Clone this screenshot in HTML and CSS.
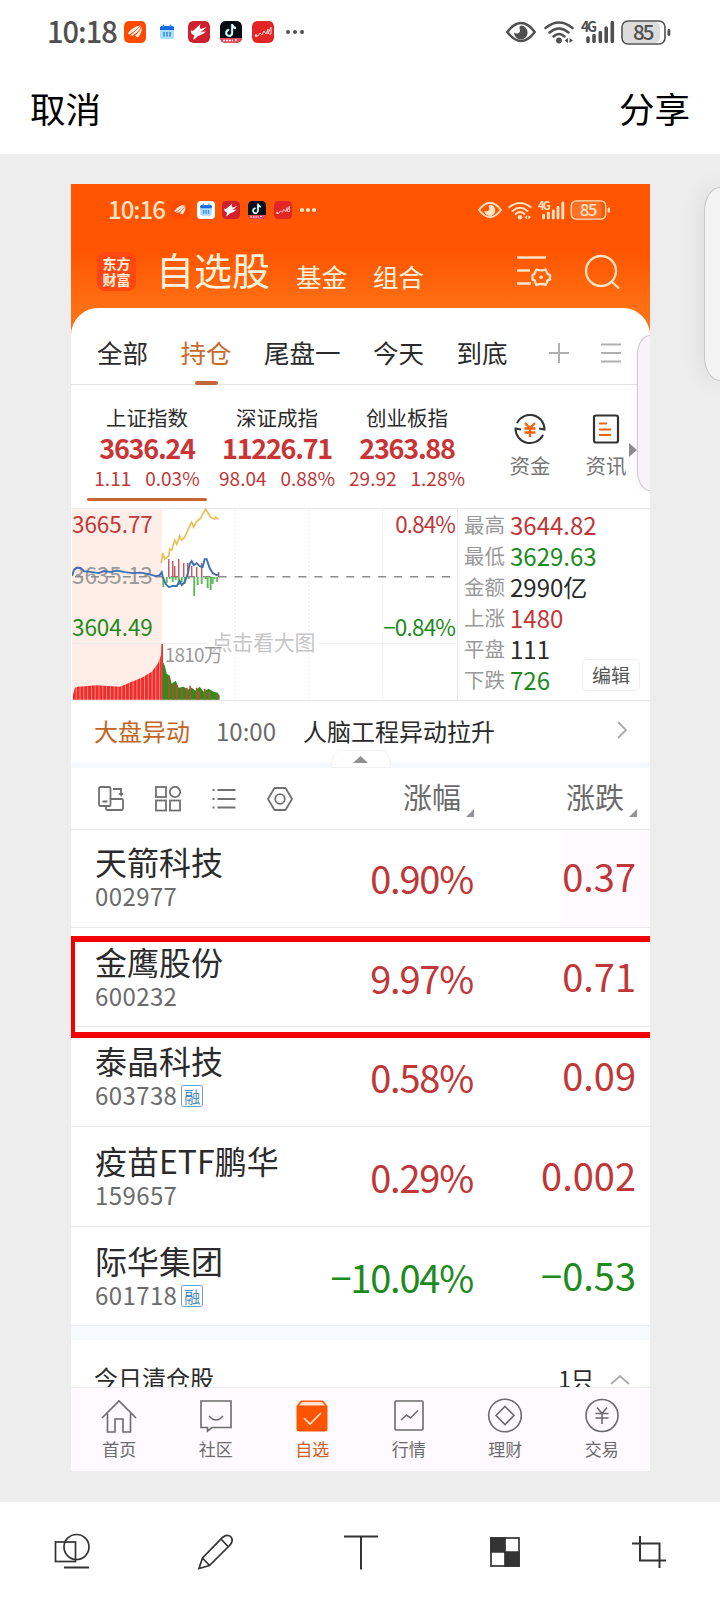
FILE: index.html
```html
<!DOCTYPE html>
<html lang="zh-CN">
<head>
    <meta charset="utf-8">
    <title>编辑截图</title>
    <link rel="stylesheet" href="styles.css">
</head>
<body>
    <!-- shared icons -->
    <svg class="sprite" width="0" height="0">
        <symbol id="app-wing" viewBox="0 0 22 22">
            <path d="M4 12.500Q8 6 16 4.500Q13 9 5 13.500ZM6 14.500Q12 10 17 4.500Q16 10 9 14.500ZM11 15Q16 10 17.500 6Q18.500 11 14 16.500Z" fill="#fff3e8"/>
        </symbol>
        <symbol id="app-calendar" viewBox="0 0 22 22">
            <rect x="4" y="5" width="14" height="13" rx="2" fill="#a9dcff"/>
            <path d="M4 9V6.500Q4 5 6 5H16Q18 5 18 6.500V9Z" fill="#1769e0"/>
            <path d="M7.500 3.500V6M14.500 3.500V6M8 11V15.500M11 11V15.500M14 11V15.500" stroke="#3a8de0" stroke-width="1.600"/>
        </symbol>
        <symbol id="app-bird" viewBox="0 0 22 22">
            <rect width="22" height="22" rx="5" fill="#d0202e"/>
            <path d="M3 9Q4 11 6 9L12.500 3Q11 7 13 8L18.500 6Q16 9 12.500 11L18 10.500Q15 14 10 15L5.500 19Q5 17 6.500 14.500Q2 13 3 9Z" fill="#fff"/>
        </symbol>
        <symbol id="app-note" viewBox="0 0 22 22">
            <rect width="22" height="22" rx="5" fill="#0b0b14"/>
            <path d="M0 17H22Q22 22 17 22H5Q0 22 0 17Z" fill="#e8495c"/>
            <path d="M3 19.500H13M15 19H18" stroke="#fff" stroke-width="1.300" stroke-dasharray="2 1"/>
            <path d="M12 3V11.500A3 3 0 1 1 9 8.800M12 3.500Q12.500 6.500 16 7" fill="none" stroke="#35d6dd" stroke-width="2.200"/>
            <path d="M12.300 3.300V11.700A3 3 0 1 1 9.300 9M12.300 3.800Q13 6.800 16 7.300" fill="none" stroke="#fff" stroke-width="1.600"/>
        </symbol>
        <symbol id="app-trend" viewBox="0 0 22 22">
            <rect width="22" height="22" rx="5" fill="#e32526"/>
            <path d="M3 15H6L8 12L10 14L12 10L14 13L16 8V13L19 6V13H17" fill="none" stroke="#ffd9d5" stroke-width="1"/>
            <circle cx="4" cy="14.500" r="1.300" fill="#ffd9d5"/>
        </symbol>
        <symbol id="eye" viewBox="0 0 30 22">
            <path d="M1.300 11Q8 2 15 2T28.700 11Q22 20 15 20T1.300 11Z" fill="none" stroke="currentColor" stroke-width="2.400"/>
            <path d="M15 4.500A6.800 7 0 1 1 8 11.500Q9.500 13 12 12.200Q15 11 13.500 7.500Q13 5.500 15 4.500Z" fill="currentColor"/>
        </symbol>
        <symbol id="wifi" viewBox="0 0 30 24">
            <path d="M1.500 8Q15-3 28.500 8M5.500 12.500Q15 4.500 24.500 12.500M9.500 16.500Q15 11.500 20.500 16.500" fill="none" stroke="currentColor" stroke-width="2.500" stroke-linecap="round"/>
            <circle cx="15" cy="20.500" r="2.900" fill="currentColor"/>
            <path d="M24 18V23L20.500 20.500ZM25.500 18V23L29 20.500Z" fill="currentColor"/>
        </symbol>
        <symbol id="corner" viewBox="0 0 8 8"><path d="M8 0V8H0Z" fill="#93939a"/></symbol>
    </svg>

    <div class="status">
        <span class="clock">10:18</span>
        <svg class="app orange"><use href="#app-wing"/></svg>
        <svg class="app"><use href="#app-calendar"/></svg>
        <svg class="app"><use href="#app-bird"/></svg>
        <svg class="app"><use href="#app-note"/></svg>
        <svg class="app"><use href="#app-trend"/></svg>
        <span class="dots"><i></i><i></i><i></i></span>
        <svg class="eye"><use href="#eye"/></svg>
        <svg class="wifi"><use href="#wifi"/></svg>
        <svg class="signal" viewBox="0 0 34 24">
            <path d="M7 18V21.500M13 15.500V21.500M19.300 12.500V21.500M25.200 8V21.500M31.300 2.500V21.500" stroke="currentColor" stroke-width="3.600" stroke-linecap="round"/>
            <text x="0" y="11.500" textLength="16" font-size="14" font-weight="700" fill="currentColor">4G</text>
        </svg>
        <svg class="battery" viewBox="0 0 50 25">
            <rect x="2" y="2" width="37" height="21" rx="5" fill="currentColor" opacity=".2"/>
            <rect x="1" y="1" width="43" height="23" rx="6" fill="none" stroke="currentColor" stroke-width="1.600"/>
            <rect x="46.500" y="9" width="2.800" height="7" rx="1.400" fill="currentColor"/>
            <text x="12" y="20" textLength="21.500" font-size="20.500" font-weight="500" fill="currentColor">85</text>
        </svg>
    </div>

    <div class="title-bar">
        <span>取消</span>
        <span>分享</span>
    </div>

    <div class="canvas">
        <div class="edge-bubble"></div>
        <div class="shot">
            <div class="inner-bubble"></div>
            <div class="header">
                <div class="status small">
                    <span class="clock">10:16</span>
                    <svg class="app orange"><use href="#app-wing"/></svg>
                    <svg class="app white"><use href="#app-calendar"/></svg>
                    <svg class="app"><use href="#app-bird"/></svg>
                    <svg class="app"><use href="#app-note"/></svg>
                    <svg class="app"><use href="#app-trend"/></svg>
                    <span class="dots"><i></i><i></i><i></i></span>
                    <svg class="eye"><use href="#eye"/></svg>
                    <svg class="wifi"><use href="#wifi"/></svg>
                    <svg class="signal" viewBox="0 0 34 24">
                        <path d="M7 18V21.500M13 15.500V21.500M19.300 12.500V21.500M25.200 8V21.500M31.300 2.500V21.500" stroke="currentColor" stroke-width="3.600" stroke-linecap="round"/>
                        <text x="0" y="11.500" textLength="16" font-size="14" font-weight="700" fill="currentColor">4G</text>
                    </svg>
                    <svg class="battery" viewBox="0 0 50 25">
                        <rect x="2" y="2" width="37" height="21" rx="5" fill="currentColor" opacity=".2"/>
                        <rect x="1" y="1" width="43" height="23" rx="6" fill="none" stroke="currentColor" stroke-width="1.600"/>
                        <rect x="46.500" y="9" width="2.800" height="7" rx="1.400" fill="currentColor"/>
                        <text x="12" y="20" textLength="21.500" font-size="20.500" font-weight="500" fill="currentColor">85</text>
                    </svg>
                </div>
                <div class="brand">
                    <div class="logo">东方<br>财富</div>
                    <span class="brand-main">自选股</span>
                    <span class="brand-sub">基金</span>
                    <span class="brand-sub">组合</span>
                    <svg class="filter" width="36" height="34" viewBox="0 0 36 34" fill="none" stroke="#ffe3c4" stroke-width="2.300">
                        <path d="M1 3.500H30M1 16.500H14M1 29.500H15"/>
                        <path d="M20.500 15.500Q25 17.500 29.500 15.500L31 18.500Q31 20 34 21V25.500Q31 26 31 28L29.500 31Q25 29 20.500 31L19 28Q19 26 16.500 25.500V21Q19 20 19 18.500Z" stroke-linejoin="round"/>
                        <circle cx="25.200" cy="23.200" r="1.800" fill="#ffe3c4" stroke="none"/>
                    </svg>
                    <svg class="search" width="36" height="36" viewBox="0 0 36 36" fill="none" stroke="#ffe3c4" stroke-width="2.300">
                        <circle cx="17" cy="17" r="15"/><path d="M27 27L35 34.500"/>
                    </svg>
                </div>
            </div>

            <div class="tabs">
                <span>全部</span>
                <span class="active">持仓</span>
                <span>尾盘一</span>
                <span>今天</span>
                <span>到底</span>
                <svg width="20" height="20" viewBox="0 0 20 20" stroke="#b0b0b0" stroke-width="2"><path d="M10 0V20M0 10H20"/></svg>
                <svg width="20" height="20" viewBox="0 0 20 20" stroke="#b0b0b0" stroke-width="2"><path d="M0 1.500H20M0 10H20M0 18.500H20"/></svg>
            </div>

            <div class="indices">
                <div class="index current">
                    <span class="index-name">上证指数</span>
                    <b>3636.24</b>
                    <span class="index-change"><i>1.11</i><i>0.03%</i></span>
                </div>
                <div class="index">
                    <span class="index-name">深证成指</span>
                    <b>11226.71</b>
                    <span class="index-change"><i>98.04</i><i>0.88%</i></span>
                </div>
                <div class="index">
                    <span class="index-name">创业板指</span>
                    <b>2363.88</b>
                    <span class="index-change"><i>29.92</i><i>1.28%</i></span>
                </div>
                <div class="shortcut">
                    <svg width="32" height="32" viewBox="0 0 32 32" fill="none" stroke="#333" stroke-width="2">
                        <path d="M3 10A14.500 14.500 0 0 1 30.500 16.500L25 15.500M29 22A14.500 14.500 0 0 1 1.500 15.500L7 16.500"/>
                        <path d="M11 10L16 15L21 10M10.500 15.500H21.500M10.500 19.500H21.500M16 15V24" stroke="#f0640f" stroke-width="2.400"/>
                    </svg>
                    <span>资金</span>
                </div>
                <div class="shortcut news">
                    <svg width="32" height="32" viewBox="0 0 32 32" fill="none" stroke="#333" stroke-width="2.200">
                        <rect x="4" y="2.500" width="24" height="27" rx="2"/>
                        <path d="M9 10.500H17M9 16.500H21M9 22H21" stroke="#f0640f"/>
                    </svg>
                    <span>资讯</span>
                </div>
                <svg class="more" width="8" height="14" viewBox="0 0 8 14"><path d="M0 0L8 7L0 14Z" fill="#8c8c8c"/></svg>
            </div>

            <div class="market">
                <svg class="chart" width="386" height="193" viewBox="0 0 386 193">
                    <defs>
                        <pattern id="bars" width="3.800" height="10" patternUnits="userSpaceOnUse">
                            <rect width="3.800" height="10" fill="#ef2d2d"/><rect width=".8" height="10" fill="#ff9a92"/>
                        </pattern>
                    </defs>
                    <rect x="0" y="1" width="90" height="191" fill="#ffede7"/>
                    <path d="M163.500 1V192M237.500 1V192M311.500 1V192" stroke="#ececec" stroke-dasharray="2 2"/>
                    <path d="M0 135.500H136M247 135.500H385" stroke="#ececec"/>
                    <text x="0" y="76" textLength="81" font-size="22.500" fill="#999">3635.13</text>
                    <path d="M3 68.700H385" stroke="#8b8b8b" stroke-width="1.300" stroke-dasharray="8 8"/>
                    <path d="M97 69V51M101 69V53M103 69V58M107 69V51M112 69V55M116 69V55M120 69V58M125 69V59M130 69V55M147 69V64" stroke="#c75a5f" stroke-width="1.500"/>
                    <path d="M91.500 69V79M95 69V75M98 69V71M101 69V74M104 69V72M107 69V77M110 69V74M113 69V76M117 69V71M122.500 69V88M126 69V77M130 69V76M134 69V71M136 69V80M139 69V82M141 69V76M143 69V71M145.500 69V74" stroke="#5fb958" stroke-width="1.900"/>
                    <polyline points="0,68 2,62 5,59.500 9,60 12,63 20,64 27,65 32,63 39,64 45,62.500 53,64 61,65 69,64.500 77,66 84,68 88,67 90,64 91,69 94,76 97,79 101,78 105,78 108,73 110,77 113,74 116,66 118,56 120,53 122,57 125,55 128,58 131,59 133,51 135,51 138,60 141,65 145,67 147,66" fill="none" stroke="#3d70b2" stroke-width="1.900"/>
                    <polyline points="89.500,55 91,45 93,51 97,48 98,41 100,42 103,32 105,36 108,28 110,32 113,29 117,20 120,14 122,19 125,13 129,10 131,6 134,1 136,4 139,9 143,11 144,9 147,11" fill="none" stroke="#edbd56" stroke-width="1.700"/>
                    <path d="M1 192V187L3 180L6 179L24 177.500L48 179L60 174L70 170L80 164L86 156L89 148L90 136V192Z" fill="url(#bars)"/>
                    <path d="M91 192V154L93 158L95 166L98 168L100 176L104 173L107 180L112 179L116 182L120 180L124 183L128 179L132 184L137 181L142 184L146 185L148 188V192Z" fill="#289017"/>
                    <path d="M90.500 192V136M97 192V168M101.500 192V175M105 192V177M110 192V180M115 192V180M118.500 192V178M125 192V180M127 192V184M133 192V181M138 192V183M145 192V186" stroke="#c4483a" stroke-width="1.700"/>
                    <text x="0" y="25" textLength="81" font-size="22.500" fill="#bf3737">3665.77</text>
                    <text x="0" y="128.500" textLength="81" font-size="22.500" fill="#1d8a1d">3604.49</text>
                    <text x="93" y="154.500" textLength="58" font-size="19" fill="#999">1810万</text>
                    <text x="140" y="142" textLength="104" font-size="21" fill="#c6c6c6">点击看大图</text>
                    <text x="324" y="25" textLength="61" font-size="22.500" fill="#bf3737">0.84%</text>
                    <text x="312" y="128.500" textLength="73" font-size="22.500" fill="#1d8a1d">−0.84%</text>
                </svg>
                <div class="stats">
                    <div><span>最高</span><em class="up">3644.82</em></div>
                    <div><span>最低</span><em class="down">3629.63</em></div>
                    <div><span>金额</span><em>2990亿</em></div>
                    <div><span>上涨</span><em class="up">1480</em></div>
                    <div><span>平盘</span><em>111</em></div>
                    <div><span>下跌</span><em class="down">726</em></div>
                    <div class="edit">编辑</div>
                </div>
            </div>

            <div class="alert-row">
                <span class="alert-tag">大盘异动</span>
                <span class="alert-time">10:00</span>
                <span>人脑工程异动拉升</span>
                <svg width="10" height="18" viewBox="0 0 10 18" fill="none" stroke="#aaa" stroke-width="1.800"><path d="M1 1L9 9L1 17"/></svg>
            </div>
            <div class="fold">
                <svg width="60" height="18" viewBox="0 0 60 18">
                    <path d="M0 17.500Q2 0 10 .5H50Q58 0 60 17.500Z" fill="#fff" stroke="#f1f1f4"/>
                    <path d="M22 13L29.500 6L37 13Z" fill="#8f8f8f"/>
                </svg>
            </div>

            <div class="list-head">
                <svg width="26" height="26" viewBox="0 0 26 26" fill="none" stroke="#707070" stroke-width="1.800">
                    <path d="M8 20H2.500Q1 20 1 18.500V2.500Q1 1 2.500 1H11Q12.500 1 12.500 2.500V19.500M4.500 15.500H9.500"/>
                    <path d="M15 3H23V9L21 7.500M23 9L25 7.500M12.500 13H23.500Q25 13 25 14.500V22.500Q25 24 23.500 24H9.500Q8 24 8 22.500V20H12.500"/>
                </svg>
                <svg width="28" height="26" viewBox="0 0 28 26" fill="none" stroke="#707070" stroke-width="1.800">
                    <rect x="2" y="1" width="10" height="10"/><circle cx="21" cy="6" r="5.200"/>
                    <rect x="2" y="14.500" width="10" height="10"/><rect x="16" y="14.500" width="10" height="10"/>
                </svg>
                <svg width="26" height="26" viewBox="0 0 26 26" stroke="#707070" stroke-width="2.200">
                    <path d="M6.500 4H24.500M6.500 13H24.500M6.500 21.500H24.500"/><path d="M1.500 4H3.500M1.500 13H3.500M1.500 21.500H3.500"/>
                </svg>
                <svg width="26" height="26" viewBox="0 0 26 26" fill="none" stroke="#707070" stroke-width="1.800">
                    <path d="M7.500 2H18.500L25 13L18.500 24H7.500L1 13Z" stroke-linejoin="round"/><circle cx="13" cy="13" r="4.800"/>
                </svg>
                <div class="col-rate">涨幅<svg><use href="#corner"/></svg></div>
                <div class="col-diff">涨跌<svg><use href="#corner"/></svg></div>
            </div>

            <div class="stocks">
                <div class="stock">
                    <div class="stock-name">天箭科技<small>002977</small></div>
                    <div class="rate up">0.90%</div>
                    <div class="diff up tint">0.37</div>
                </div>
                <div class="stock">
                    <div class="mark"></div>
                    <div class="stock-name">金鹰股份<small>600232</small></div>
                    <div class="rate up">9.97%</div>
                    <div class="diff up">0.71</div>
                </div>
                <div class="stock">
                    <div class="stock-name">泰晶科技<small>603738<i>融</i></small></div>
                    <div class="rate up">0.58%</div>
                    <div class="diff up">0.09</div>
                </div>
                <div class="stock">
                    <div class="stock-name">疫苗ETF鹏华<small>159657</small></div>
                    <div class="rate up">0.29%</div>
                    <div class="diff up">0.002</div>
                </div>
                <div class="stock">
                    <div class="stock-name">际华集团<small>601718<i>融</i></small></div>
                    <div class="rate down">−10.04%</div>
                    <div class="diff down">−0.53</div>
                </div>
            </div>

            <div class="closed">
                <span>今日清仓股</span>
                <span class="closed-count">1只</span>
                <svg width="20" height="10" viewBox="0 0 20 10" fill="none" stroke="#aaa" stroke-width="1.700"><path d="M1 9L10 1L19 9"/></svg>
            </div>

            <div class="nav">
                <div>
                    <svg viewBox="0 0 36 36"><path d="M1 20L18 3L35 20M6.500 15.500V34H14V21H22V34H29.500V15.500"/></svg>
                    <span>首页</span>
                </div>
                <div>
                    <svg viewBox="0 0 36 36"><path d="M3 3H33V29.500H14L9.500 33V29.500H3ZM11 18Q18 26 25 18"/></svg>
                    <span>社区</span>
                </div>
                <div class="active">
                    <svg viewBox="0 0 36 36"><path d="M2.500 8L7 2.500H29L33.500 8V31Q33.500 33.500 31 33.500H5Q2.500 33.500 2.500 31Z" fill="#ff5500" stroke="none"/><path d="M8 4H28L31 7.500H5Z" fill="#ffe6d3" stroke="none"/><path d="M10 20L16 26L27 15" stroke="#ffe6d3"/></svg>
                    <span>自选</span>
                </div>
                <div>
                    <svg viewBox="0 0 36 36"><rect x="4" y="3" width="28" height="29" rx="1"/><path d="M10 22L15.500 17L19.500 20L27 12.500"/></svg>
                    <span>行情</span>
                </div>
                <div>
                    <svg viewBox="0 0 36 36"><circle cx="18" cy="17.500" r="16.300"/><path d="M18 8.500L27 17.500L18 26.500L9 17.500Z"/></svg>
                    <span>理财</span>
                </div>
                <div>
                    <svg viewBox="0 0 36 36"><circle cx="18" cy="17.500" r="16"/><path d="M13 9.500L18 15.500L23 9.500M11.500 15.500H24.500M11.500 20H24.500M18 15.500V26"/></svg>
                    <span>交易</span>
                </div>
            </div>
        </div>
    </div>

    <div class="tools">
        <div><svg viewBox="0 0 40 40"><rect x="3.500" y="12" width="20" height="19.500"/><circle cx="24.500" cy="17" r="12.500"/><path d="M12 37.500H37" stroke-width="2"/></svg></div>
        <div><svg viewBox="0 0 40 40"><path d="M3 38.500L6.500 28L26.500 7.500Q31.500 3.500 35 7Q38 11 33.500 15.500L13.500 35.500ZM6.500 28L13.500 35.500M25 9L32 16.500"/></svg></div>
        <div><svg viewBox="0 0 40 40"><path d="M4 6.500H38M21 6.500V39.500" stroke-width="2"/></svg></div>
        <div><svg viewBox="0 0 40 40"><rect x="7" y="8" width="28" height="28"/><path d="M7 8H21V22H7ZM21 22H35V36H21Z" fill="#333"/></svg></div>
        <div><svg viewBox="0 0 40 40"><path d="M4 13.500H31.500V38M12 6V30.500H38" stroke-width="2"/></svg></div>
    </div>
</body>
</html>
```
FILE: styles.css
```css
* {
    box-sizing: border-box;
}

body {
    margin: 0;
    width: 720px;
    height: 1600px;
    overflow: hidden;
    background-color: #fff;
    color: #2b2b2b;
    font-family: "Noto Sans CJK SC", sans-serif;
    font-weight: 400;
}

i, em {
    font-style: normal;
}

svg {
    display: block;
    flex: none;
}

.sprite {
    position: absolute;
}

/* status bar, used full size and inside the screenshot */
.status {
    display: flex;
    align-items: center;
    height: 64px;
    padding-left: 47px;
    color: #505050;
}

.clock {
    width: 77px;
    font-size: 29px;
    font-weight: 500;
    line-height: 30px;
    letter-spacing: -1px;
    padding-bottom: 4px;
}

.app {
    width: 22px;
    height: 22px;
    margin-right: 10px;
    border-radius: 5px;
}

.orange {
    background-color: #ff4a00;
}

.white {
    background-color: #fff;
}

.dots {
    display: flex;
    gap: 3px;
    width: 222px;
    padding-left: 2px;
}

.dots i {
    width: 4px;
    height: 4px;
    border-radius: 50%;
    background-color: currentColor;
}

.eye {
    width: 30px;
    height: 22px;
}

.wifi {
    width: 30px;
    height: 24px;
    margin-left: 8px;
}

.signal {
    width: 34px;
    height: 24px;
    margin-left: 7px;
}

.battery {
    width: 50px;
    height: 25px;
    margin-left: 6px;
}

.small {
    height: 52px;
    padding-left: 37px;
    color: #ffe3c4;
}

.small .clock {
    width: 63px;
    font-size: 24px;
    padding-bottom: 2px;
}

.small .app {
    width: 18px;
    height: 18px;
    margin-right: 7.700px;
    border-radius: 4px;
}

.small .dots {
    gap: 2.500px;
    width: 179px;
    padding-left: 1px;
}

.small .dots i {
    width: 3.500px;
    height: 3.500px;
}

.small .eye {
    width: 24px;
    height: 18px;
}

.small .wifi {
    width: 24px;
    height: 19px;
    margin-left: 6px;
}

.small .signal {
    width: 27px;
    height: 19px;
    margin-left: 6px;
}

.small .battery {
    width: 41px;
    height: 20px;
    margin-left: 5px;
}

.title-bar {
    display: flex;
    justify-content: space-between;
    height: 90px;
    padding: 18px 30px 0;
    font-size: 35.500px;
    line-height: 52px;
    color: #000;
}

.canvas {
    position: relative;
    height: 1348px;
    padding: 30px 71px 0;
    background-color: #ededed;
}

.edge-bubble {
    position: absolute;
    left: 704px;
    top: 33px;
    width: 16px;
    height: 194px;
    border: 1px solid #c8c8c8;
    border-right: 0;
    border-radius: 16px 0 0 16px / 24px 0 0 24px;
    background-color: #f3f3f3;
    box-shadow: 0 0 24px rgba(0, 0, 0, 0.1);
}

.shot {
    position: relative;
    width: 579px;
    height: 1287px;
    overflow: hidden;
    background-color: #fff;
}

.inner-bubble {
    position: absolute;
    left: 566px;
    top: 151px;
    width: 13px;
    height: 156px;
    border: 1px solid #cdc8cd;
    border-right: 0;
    border-radius: 13px 0 0 13px / 20px 0 0 20px;
    background-color: #f8f3f8;
    box-shadow: 0 0 10px rgba(80, 0, 80, 0.05);
    z-index: 1;
}

.header {
    height: 150px;
    background: linear-gradient(#ff5500 45%, #ff7014 82%);
}

.brand {
    display: flex;
    height: 72px;
    padding-left: 26px;
    color: #fff3dd;
}

.logo {
    width: 39px;
    height: 39px;
    margin-top: 16px;
    padding-top: 3px;
    border-radius: 8px;
    background-color: #ff4713;
    font-size: 14px;
    font-weight: 700;
    line-height: 16px;
    text-align: center;
}

.brand-main {
    width: 139px;
    padding-left: 20px;
    font-size: 38px;
    line-height: 65px;
}

.brand-sub {
    width: 77px;
    padding-left: 21px;
    font-size: 25.500px;
    line-height: 79px;
}

.filter {
    margin: 18px 0 0 87px;
}

.search {
    margin: 18px 0 0 32px;
}

.tabs {
    display: flex;
    align-items: center;
    height: 77px;
    margin-top: -26px;
    padding: 13px 0 0 26px;
    border-bottom: 1px solid #e5e5e5;
    border-radius: 27px 27px 0 0;
    background-color: #fff;
    font-size: 25.500px;
    line-height: 61px;
    white-space: nowrap;
}

.tabs span {
    height: 64px;
    margin-right: 32.500px;
}

.tabs .active {
    position: relative;
    color: #c96a2e;
}

.tabs .active::after {
    content: "";
    position: absolute;
    left: 14px;
    bottom: 0;
    width: 23px;
    height: 4px;
    border-radius: 2px;
    background-color: #c0683a;
}

.tabs svg {
    margin: 0 32px 0 0;
}

.tabs span:nth-of-type(5) {
    margin-right: 41px;
}

.indices {
    display: flex;
    height: 123px;
    padding-left: 11px;
}

.index {
    display: flex;
    flex-direction: column;
    align-items: center;
    width: 130px;
    padding-top: 16px;
    color: #bf3737;
}

.index-name {
    font-size: 20.500px;
    line-height: 32px;
    color: #2b2b2b;
}

.index b {
    font-size: 27px;
    line-height: 30px;
    letter-spacing: -1.300px;
    color: #c93434;
}

.index-change {
    display: flex;
    gap: 14px;
    font-size: 19px;
    line-height: 29px;
}

.current::after {
    content: "";
    width: 120px;
    height: 3px;
    margin-top: 6px;
    border-radius: 2px;
    background-color: #c96530;
}

.shortcut {
    display: flex;
    flex-direction: column;
    align-items: center;
    width: 76px;
    margin-left: 20px;
    padding-top: 28px;
    font-size: 20.500px;
    color: #757575;
}

.shortcut span {
    margin-top: 5px;
    line-height: 30px;
}

.news {
    margin-left: 0;
}

.more {
    margin: 58px 0 0 -15px;
    z-index: 2;
}

.market {
    display: flex;
    height: 193px;
    border-top: 1px solid #e9e9e9;
    border-bottom: 1px solid #e9e9e9;
    padding-left: 1px;
}

.chart {
    margin-top: -1px;
    border-right: 1px solid #e9e9e9;
}

.stats {
    position: relative;
    flex: 1;
    padding: 0 0 0 6px;
}

.stats div {
    display: flex;
    align-items: center;
    height: 31px;
}

.stats span {
    width: 46px;
    font-size: 20.500px;
    line-height: 31px;
    color: #999;
}

.stats em {
    font-size: 24px;
    line-height: 31px;
}

.stats .edit {
    position: absolute;
    right: 10px;
    bottom: 9px;
    width: 58px;
    height: 32px;
    justify-content: center;
    border: 1px solid #eee;
    border-radius: 5px;
    background-color: #fff;
    font-size: 19px;
    line-height: 28px;
    color: #555;
}

.up {
    color: #bf3737;
}

.down {
    color: #1d8a1d;
}

.alert-row {
    display: flex;
    align-items: center;
    height: 61px;
    padding: 0 23px 3px 23px;
    font-size: 24px;
}

.alert-tag {
    width: 122px;
    color: #c4651f;
}

.alert-time {
    width: 87px;
    color: #6b6b6b;
}

.alert-row svg {
    margin-left: auto;
}

.fold {
    display: flex;
    justify-content: center;
    height: 6px;
    background-color: #f6f9ff;
}

.fold svg {
    margin-top: -12px;
}

.list-head {
    display: flex;
    align-items: center;
    height: 62px;
    padding-left: 27px;
    border-bottom: 1px solid #e9e9e9;
    color: #6b6b6b;
    font-size: 29px;
}

.list-head > svg {
    margin-right: 29.500px;
}

.list-head div {
    display: flex;
    align-items: flex-end;
    line-height: 44px;
    padding-bottom: 5px;
}

.list-head div svg {
    width: 8px;
    height: 8px;
    margin: 0 0 1px 5px;
}

.col-rate {
    margin-left: 81px;
}

.col-diff {
    margin-left: 92px;
}

.stock {
    position: relative;
    display: flex;
    height: 99.700px;
    border-bottom: 1px solid #ececec;
}

.stock:first-child {
    margin-top: -2px;
}

.stock-name {
    width: 230px;
    padding: 11px 0 0 24px;
    font-size: 32px;
    line-height: 44px;
    white-space: nowrap;
}

.stock-name small {
    display: flex;
    align-items: center;
    margin-top: 1px;
    font-size: 24px;
    line-height: 24px;
    letter-spacing: 0.400px;
    color: #6b6b6b;
}

.stock-name small i {
    width: 22px;
    height: 22px;
    margin: 2px 0 0 4px;
    border: 1px solid #6d9fc8;
    border-radius: 3px;
    font-size: 16px;
    line-height: 20px;
    letter-spacing: 0;
    text-align: center;
    color: #4a8cc0;
}

.rate,
.diff {
    padding-top: 3px;
    font-size: 38px;
    line-height: 94px;
    letter-spacing: -1.200px;
    text-align: right;
}

.rate {
    width: 172px;
}

.diff {
    width: 177px;
    padding-right: 14px;
    line-height: 89px;
    letter-spacing: 0;
}

.tint {
    background: linear-gradient(to right, #fff 88px, #fefaff 88px) 0 3px no-repeat;
}

/* red frame drawn by hand over the second row */
.mark {
    position: absolute;
    left: 0;
    top: 8px;
    width: 579px;
    height: 102px;
    border: 6px solid #f40000;
    border-left-width: 4px;
    border-right: 0;
    z-index: 1;
}

.closed {
    display: flex;
    align-items: flex-start;
    height: 61px;
    padding: 26px 20px 0 23px;
    border-top: 14px solid #f6faff;
    font-size: 24px;
    line-height: 24px;
    overflow: hidden;
}

.closed-count {
    margin-left: auto;
    font-size: 23px;
}

.closed svg {
    margin: 9px 0 0 16px;
}

.nav {
    position: relative;
    display: flex;
    height: 90px;
    border-top: 1px solid #ececf0;
    background-color: #fefaff;
}

.nav div {
    flex: 1;
    display: flex;
    flex-direction: column;
    align-items: center;
    padding-top: 10px;
    font-size: 17px;
    line-height: 24px;
    color: #6b6b6b;
}

.nav svg {
    width: 36px;
    height: 36px;
    fill: none;
    stroke: #6b6b6b;
    stroke-width: 1.600;
}

.nav span {
    margin-top: 3px;
}

.nav .active {
    color: #d2611f;
}

.tools {
    display: flex;
    height: 98px;
    background-color: #fff;
}

.tools div {
    flex: 1;
    display: flex;
    justify-content: center;
    padding-top: 28px;
}

.tools svg {
    width: 40px;
    height: 40px;
    fill: none;
    stroke: #333;
    stroke-width: 1.700;
}
```
